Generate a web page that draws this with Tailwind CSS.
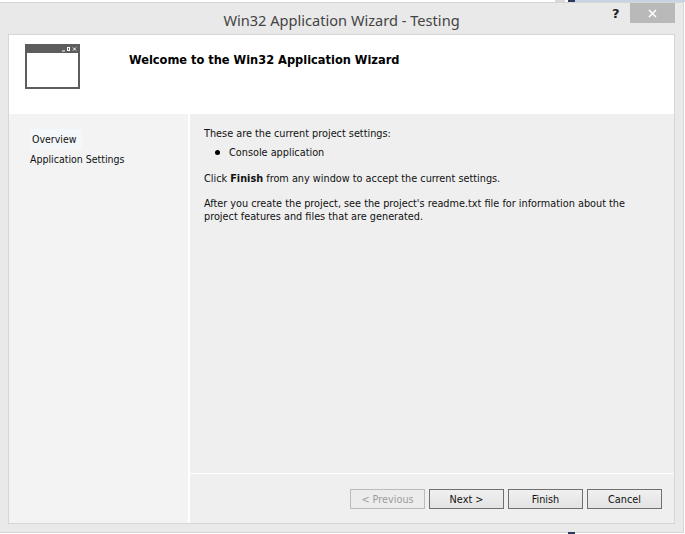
<!DOCTYPE html>
<html>
<head>
<meta charset="utf-8">
<script src="https://cdn.jsdelivr.net/npm/@tailwindcss/browser@4"></script>
</head>
<body class="m-0 bg-white">
<div class="relative w-[685px] h-[534px] overflow-hidden bg-white font-['DejaVu_Sans_Condensed','DejaVu_Sans',sans-serif] text-[10.8px] leading-[13px] text-[#111]">
  <div class="absolute top-0 left-[555px] h-[2px] w-[10px] bg-[#d9d9d9]"></div>
  <div class="absolute top-0 left-[568px] h-[2px] w-[7px] bg-[#2b3a5e]"></div>
  <div class="absolute top-0 left-[575px] h-[2px] w-[110px] bg-[#c8d3e4]"></div>
  <div class="absolute top-[532px] left-[568px] h-[2px] w-[7px] bg-[#2b3a5e]"></div>
  <div class="h-[2px]"></div>
  <div class="w-[684px] h-[531px] border-t border-b border-r border-[#d6d6d6] bg-[#e9e9e9] flex flex-col">
    <div class="h-[31px] flex items-start relative">
      <div class="flex-1 text-center font-['Noto_Sans',sans-serif] text-[14.6px] leading-[20px] pt-[7px] text-[#444]">Win32 Application Wizard - Testing</div>
      <div class="absolute left-[612px] top-[1px] font-['DejaVu_Sans',sans-serif] text-[13px] leading-[20px] font-bold text-[#222]">?</div>
      <div class="absolute left-[630px] top-0 w-[45px] h-[20px] bg-[#b9b9b9] flex items-center justify-center">
        <svg width="9" height="9" viewBox="0 0 9 9"><path d="M1 1l7 7M8 1l-7 7" stroke="#fff" stroke-width="1.5"/></svg>
      </div>
    </div>
    <div class="ml-[8px] w-[667px] h-[490px] border border-[#d6d6d6] bg-white flex flex-col">
      <div class="h-[79px] flex shrink-0">
        <div class="ml-[16px] mt-[9px] w-[55px] h-[45px] border-2 border-[#5d5d5d] bg-white relative">
          <div class="h-[7px] bg-[#5d5d5d] flex items-center justify-end pr-[1px]">
            <svg width="15" height="5" viewBox="0 0 15 5" fill="none"><path d="M0 4h3" stroke="#fff"/><rect x="5.5" y="0.5" width="2" height="3" stroke="#fff"/><path d="M11 0.5l3 3M14 0.5l-3 3" stroke="#fff"/></svg>
          </div>
        </div>
        <div class="ml-[49px] mt-[17px] font-bold text-[12.7px] leading-[16px] text-black">Welcome to the Win32 Application Wizard</div>
      </div>
      <div class="flex flex-1 min-h-0">
        <div class="w-[179px] bg-[#f3f3f3] shrink-0 pt-[15px] pl-[21px] text-[10.5px]">
          <div class="w-[53px] h-[21px] bg-[#f4f7fa] flex items-center pl-[2px]">Overview</div>
          <div class="mt-[3px]">Application Settings</div>
        </div>
        <div class="w-[2px] shrink-0 bg-white"></div>
        <div class="flex-1 flex flex-col bg-[#efefef] min-w-0">
          <div class="h-[360px] border-b border-white pl-[14px] pt-[13px]">
            <p>These are the current project settings:</p>
            <div class="flex items-center mt-[6px] pl-[11px]"><span class="w-[5px] h-[5px] rounded-full bg-black"></span><span class="ml-[9px]">Console application</span></div>
            <p class="mt-[13px]">Click <b>Finish</b> from any window to accept the current settings.</p>
            <p class="mt-[12px] w-[440px]">After you create the project, see the project's readme.txt file for information about the project features and files that are generated.</p>
          </div>
          <div class="flex-1 flex justify-end items-start gap-[4px] pt-[15px] pr-[12px]">
            <button class="w-[75px] h-[20px] border border-[#bcbcbc] bg-[#ececec] text-[#9c9c9c]">&lt; Previous</button>
            <button class="w-[75px] h-[20px] border border-[#707070] bg-gradient-to-b from-[#f0f0f0] to-[#e3e3e3]">Next &gt;</button>
            <button class="w-[75px] h-[20px] border border-[#707070] bg-gradient-to-b from-[#f0f0f0] to-[#e3e3e3]">Finish</button>
            <button class="w-[75px] h-[20px] border border-[#707070] bg-gradient-to-b from-[#f0f0f0] to-[#e3e3e3]">Cancel</button>
          </div>
        </div>
      </div>
    </div>
  </div>
</div>
</body>
</html>
